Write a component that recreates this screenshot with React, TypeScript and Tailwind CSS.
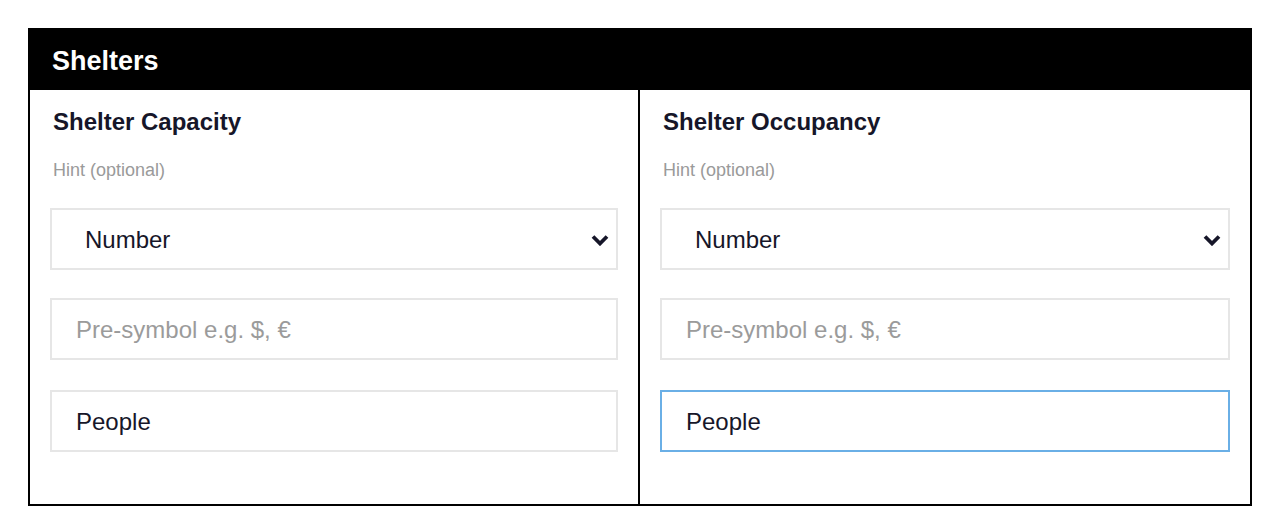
import React from "react";

function Chevron() {
  return (
    <svg width="18" height="12" viewBox="0 0 18 12" fill="none" aria-hidden="true">
      <path d="M2 2.5 L9 9.5 L16 2.5" stroke="#161629" strokeWidth="3.8" strokeLinecap="butt" strokeLinejoin="miter" />
    </svg>
  );
}

function Column({ title, focused, withDivider }: { title: string; focused?: boolean; withDivider?: boolean }) {
  return (
    <div className={"flex flex-col pt-[18px] pb-[52px] px-5 " + (withDivider ? "border-r-2 border-black" : "")}>
      <div className="pl-[3px] text-[24px] leading-[28px] font-bold text-[#161629]">{title}</div>
      <div className="pl-[3px] mt-[22px] text-[18px] leading-[24px] text-[#9a9a9a]">Hint (optional)</div>
      <div className="mt-[26px] h-[62px] border-2 border-[#e6e6e6] flex items-center justify-between pl-[33px] pr-[7px] pt-[2px]">
        <span className="text-[24px] leading-[28px] text-[#161629]">Number</span>
        <Chevron />
      </div>
      <div className="mt-[28px] h-[62px] border-2 border-[#e6e6e6] flex items-center pl-[24px] pt-[2px]">
        <span className="text-[24px] leading-[28px] text-[#9b9b9b]">Pre-symbol e.g. $, €</span>
      </div>
      <div
        className={
          "mt-[30px] h-[62px] border-2 flex items-center pl-[24px] pt-[2px] " +
          (focused ? "border-[#6aafe6]" : "border-[#e6e6e6]")
        }
      >
        <span className="text-[24px] leading-[28px] text-[#161629]">People</span>
      </div>
    </div>
  );
}

export default function App() {
  return (
    <div className="w-[1284px] h-[526px] bg-white font-['Liberation_Sans',Arial,sans-serif] pt-[28px]">
      <div className="ml-[28px] w-[1224px] border-2 border-black">
        <div className="h-[60px] bg-black pl-[22px] pt-[3px] text-white text-[27px] leading-[57px] font-bold">Shelters</div>
        <div className="grid grid-cols-2">
          <Column title="Shelter Capacity" withDivider />
          <Column title="Shelter Occupancy" focused />
        </div>
      </div>
    </div>
  );
}
